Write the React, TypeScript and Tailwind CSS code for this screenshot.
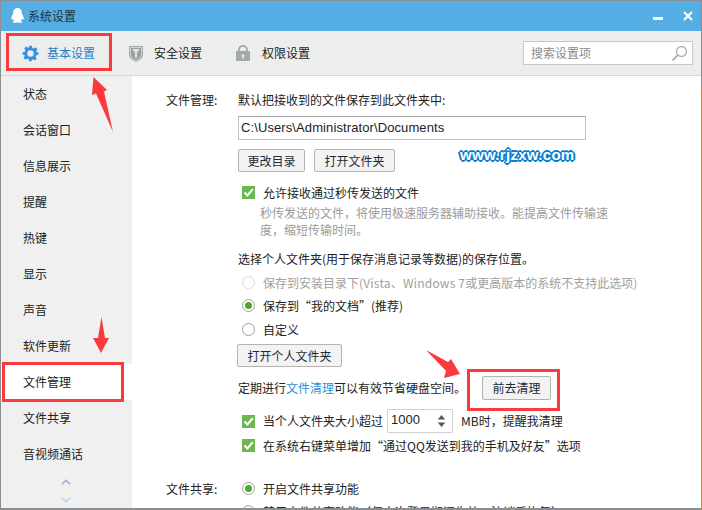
import React from 'react'
import { ChevronDown, ChevronUp } from 'lucide-react'

const font = 'font-["Noto_Sans_CJK_SC","Liberation_Sans",sans-serif]'

const menuItems = ['状态', '会话窗口', '信息展示', '提醒', '热键', '显示', '声音', '软件更新', '文件管理', '文件共享', '音视频通话']

const Check = () => (
  <span className="flex h-[13px] w-[13px] shrink-0 items-center justify-center bg-[#6cb84f]">
    <svg width="11" height="11" viewBox="0 0 11 11">
      <path d="M1.5 5.5 L4.5 8.5 L9.8 2.2" fill="none" stroke="#fff" strokeWidth="2" />
    </svg>
  </span>
)

const Radio = ({ on, off }: { on?: boolean; off?: boolean }) => (
  <span className={`flex h-[13px] w-[13px] shrink-0 items-center justify-center rounded-full border bg-white ${off ? 'border-[#dcdcdc]' : 'border-[#a0a0a0]'}`}>
    {on && <span className="h-[7px] w-[7px] rounded-full bg-[#4fa82e]" />}
  </span>
)

const Btn = ({ label, className }: { label: string; className: string }) => (
  <button className={`flex items-center justify-center rounded-[2px] border border-[#b4b4b4] bg-[#f3f3f3] text-[12px] text-[#1c2b36] ${className}`}>
    {label}
  </button>
)

export default function App() {
  return (
    <div className={`${font} relative h-[510px] w-[702px] overflow-hidden bg-[#8a8f94] text-[12px] text-[#222]`}>
      {/* Desktop showing behind the window */}
      <div className="absolute bottom-0 right-0 top-[88px] w-[1px] bg-[#c08a40]" />

      <div className="absolute inset-x-[1px] bottom-[2px] top-[1px] flex flex-col overflow-hidden bg-white">
        {/* Title bar */}
        <div className="flex h-[30px] shrink-0 items-center justify-between bg-[#54aee4] pl-[9px] pr-[8px]">
          <div className="flex items-center gap-[3px]">
            <svg width="15" height="18" viewBox="0 0 17 20">
              <path d="M8.5 1C5 1 3.6 3.8 3.6 6.5 3.6 7.8 2 9.6 1.5 12c-.3 1.6.3 2.6.9 2.2l1-1.2c.3 1 .8 1.8 1.5 2.4-1 .4-1.8 1-1.6 1.6.3.8 3 .9 4.7.3.4.1.6.1 1 0 1.7.6 4.4.5 4.7-.3.2-.6-.6-1.2-1.6-1.6.7-.6 1.2-1.4 1.5-2.4l1 1.2c.6.4 1.2-.6.9-2.2-.5-2.4-2.1-4.2-2.1-5.500C13.400 3.800 12 1 8.500 1Z" fill="#fff" />
            </svg>
            <span className="text-[12px] text-[#1f3341]">系统设置</span>
          </div>
          <div className="flex items-center gap-[20px]">
            <span className="mt-[5px] h-[3px] w-[10px] bg-white" />
            <svg width="10" height="10" viewBox="0 0 10 10" className="mb-[1px]">
              <path d="M1 1 L9 9 M9 1 L1 9" stroke="#fff" strokeWidth="2" />
            </svg>
          </div>
        </div>

        {/* Tabs */}
        <div className="flex h-[45px] shrink-0 items-center border-b border-[#d8d8d8] bg-[#eceeee] pl-[21px] pr-[8px]">
          <div className="flex w-[107px] items-center gap-[8px]">
            <svg width="17" height="17" viewBox="0 0 24 24" fill="#3b8fdc">
              <path fillRule="evenodd" d="M10 1h4l.6 3.100 1.900.8 2.600-1.800 2.800 2.800-1.800 2.600.8 1.900L23 10v4l-3.100.6-.8 1.900 1.800 2.600-2.800 2.800-2.600-1.800-1.900.8L14 23h-4l-.6-3.100-1.900-.8-2.600 1.800-2.800-2.800 1.800-2.600-.8-1.900L1 14v-4l3.100-.6.8-1.900-1.800-2.600 2.800-2.800 2.600 1.800 1.900-.8L10 1Zm2 6.500a4.500 4.500 0 1 0 0 9 4.500 4.500 0 0 0 0-9Z" />
            </svg>
            <span className="text-[#1f7fc4]">基本设置</span>
          </div>
          <div className="flex w-[107px] items-center gap-[11px]">
            <svg width="14" height="17" viewBox="0 0 14 17">
              <path d="M0 1h14v8.500c0 3.500-3.500 5.700-7 7.500-3.500-1.800-7-4-7-7.500Z" fill="#a3a8aa" />
              <path d="M1.500 2.500h11v7c0 2.700-2.800 4.500-5.500 5.900-2.700-1.400-5.500-3.200-5.500-5.900Z" fill="#9a9fa1" stroke="#dfe2e2" strokeWidth=".8" />
              <path d="M3.200 4h7.600L8 8v4.500H6V8Z" fill="#e2e5e5" />
            </svg>
            <span>安全设置</span>
          </div>
          <div className="flex items-center gap-[12px]">
            <svg width="14" height="16" viewBox="0 0 14 16">
              <path d="M3 6.500V4.500a4 3.700 0 0 1 8 0V6.500" fill="none" stroke="#a3a8aa" strokeWidth="1.800" />
              <path d="M0 6h14v10H0Z" fill="#a3a8aa" />
              <path d="M5.700 9.500h2.600v2H7.800v2H6.200v-2H5.700Z" fill="#eceeee" />
            </svg>
            <span>权限设置</span>
          </div>
          <div className="ml-auto flex h-[24px] w-[170px] items-center justify-between border border-[#c8c8c8] bg-white pl-[7px] pr-[4px] text-[#8c8c8c]">
            <span>搜索设置项</span>
            <svg width="17" height="17" viewBox="0 0 17 17" fill="none" stroke="#b0b0b0" strokeWidth="1.300">
              <circle cx="10.500" cy="6.500" r="5" />
              <path d="M6.800 10.200 L1.500 15.500" strokeWidth="1.800" />
            </svg>
          </div>
        </div>

        <div className="flex min-h-0 flex-1">
          {/* Sidebar */}
          <div className="flex w-[131px] shrink-0 flex-col bg-[#f0f0f0]">
            {menuItems.map((item) => (
              <div key={item} className={`flex h-[36px] shrink-0 items-center pl-[22px] ${item === '文件管理' ? 'bg-white' : ''}`}>
                {item}
              </div>
            ))}
            <div className="flex flex-col items-center pr-[2px]">
              <ChevronUp size={14} strokeWidth={3} className="mt-[3px] text-[#9db6d8]" />
              <ChevronDown size={14} strokeWidth={3} className="mt-[4px] text-[#c5d3e6]" />
            </div>
          </div>

          {/* Content */}
          <div className="min-w-0 flex-1 overflow-hidden pl-[34px]">
            <div className="flex pt-[15px]">
              <div className="w-[72px] shrink-0 leading-[17px]">文件管理:</div>
              <div className="w-[440px] shrink-0">
                <div className="leading-[17px]">默认把接收到的文件保存到此文件夹中:</div>
                <div className="mt-[8px] flex h-[24px] w-[348px] items-center border border-[#c4c4c4] border-t-[#a8a8a8] bg-white pl-[2px] font-['Liberation_Sans'] text-[13px] tracking-[0.1px] text-[#222]">
                  C:\Users\Administrator\Documents
                </div>
                <div className="mt-[9px] flex gap-[9px]">
                  <Btn label="更改目录" className="h-[23px] w-[67px]" />
                  <Btn label="打开文件夹" className="h-[23px] w-[81px]" />
                </div>
                <div className="mt-[12px] flex h-[17px] items-center gap-[8px] pl-[4px]">
                  <Check />
                  <span>允许接收通过秒传发送的文件</span>
                </div>
                <div className="mt-[3px] w-[372px] pl-[22px] leading-[17px] text-[#9a9a9a]">
                  秒传发送的文件，将使用极速服务器辅助接收。能提高文件传输速度，缩短传输时间。
                </div>
                <div className="mt-[12px] leading-[17px]">选择个人文件夹(用于保存消息记录等数据)的保存位置。</div>
                <div className="mt-[7px] flex h-[17px] items-center gap-[8px] pl-[4px] text-[#a0a0a0]">
                  <Radio off />
                  <span>保存到安装目录下<span className="tracking-[0.2px]">(Vista、Windows 7</span>或更高版本的系统不支持此选项)</span>
                </div>
                <div className="mt-[6px] flex h-[17px] items-center gap-[8px] pl-[4px]">
                  <Radio on />
                  <span>保存到“我的文档”(推荐)</span>
                </div>
                <div className="mt-[7px] flex h-[17px] items-center gap-[8px] pl-[4px]">
                  <Radio />
                  <span>自定义</span>
                </div>
                <Btn label="打开个人文件夹" className="-ml-[1px] mt-[6px] h-[23px] w-[105px]" />
                <div className="mt-[9px] flex h-[24px] items-center">
                  <span>定期进行<span className="text-[#2e8fd6]">文件清理</span>可以有效节省硬盘空间。</span>
                  <Btn label="前去清理" className="ml-[16px] h-[24px] w-[69px]" />
                </div>
                <div className="mt-[9px] flex h-[24px] items-center gap-[8px] pl-[4px]">
                  <Check />
                  <span>当个人文件夹大小超过</span>
                  <div className="-ml-[4px] flex h-[24px] w-[66px] items-center justify-between rounded-[1px] border border-[#d0d0d0] bg-white pl-[3px] pr-[6px]">
                    <span className="mb-[2px] font-['Liberation_Sans'] text-[13px] text-[#222]">1000</span>
                    <svg width="9" height="14" viewBox="0 0 9 15" fill="#555">
                      <path d="M4.500 1 L8.500 6 H.5Z" />
                      <path d="M4.500 14 L8.500 9 H.5Z" />
                    </svg>
                  </div>
                  <span>MB时，提醒我清理</span>
                </div>
                <div className="mt-[4px] flex h-[17px] items-center gap-[8px] pl-[4px]">
                  <Check />
                  <span>在系统右键菜单增加“通过QQ发送到我的手机及好友”选项</span>
                </div>
              </div>
            </div>
            <div className="mt-[26px] flex">
              <div className="w-[72px] shrink-0 leading-[17px]">文件共享:</div>
              <div className="flex-1">
                <div className="flex h-[17px] items-center gap-[8px] pl-[4px]">
                  <Radio on />
                  <span>开启文件共享功能</span>
                </div>
                <div className="mt-[6px] flex h-[17px] items-center gap-[8px] pl-[4px]">
                  <Radio />
                  <span>禁用文件共享功能（仅本次登录期间生效，注销后恢复）</span>
                </div>
              </div>
            </div>
          </div>
        </div>
      </div>

      {/* Annotations drawn over the screenshot */}
      <div className="absolute left-[6px] top-[33px] h-[38px] w-[106px] border-[3px] border-[#f93a3f]" />
      <div className="absolute left-[2px] top-[362px] h-[40px] w-[122px] border-[3px] border-[#f93a3f]" />
      <div className="absolute left-[467px] top-[369px] h-[42px] w-[93px] border-[3px] border-[#f93a3f]" />
      <svg className="absolute left-0 top-0" width="702" height="510" viewBox="0 0 702 510" fill="#f93a3f">
        <polygon points="93.500,77 107,90 104,91.500 113,132 96,93.500 92,95" />
        <polygon points="101.500,317 105,338 109,338 101,353 93,338 98,338" />
        <polygon points="426,350 448,362 451,359 460,374 444,378 446,371" />
      </svg>
      <div className="absolute left-[460px] top-[144px] font-['Liberation_Sans'] text-[15px] font-bold tracking-[0.3px] text-white [text-shadow:-2px_0_0_#0a7fd0,2px_0_0_#0a7fd0,0_-2px_0_#0a7fd0,0_2px_0_#0a7fd0,-1px_-1px_0_#0a7fd0,1px_1px_0_#0a7fd0,-1px_1px_0_#0a7fd0,1px_-1px_0_#0a7fd0]">
        www.rjzxw.com
      </div>
    </div>
  )
}
